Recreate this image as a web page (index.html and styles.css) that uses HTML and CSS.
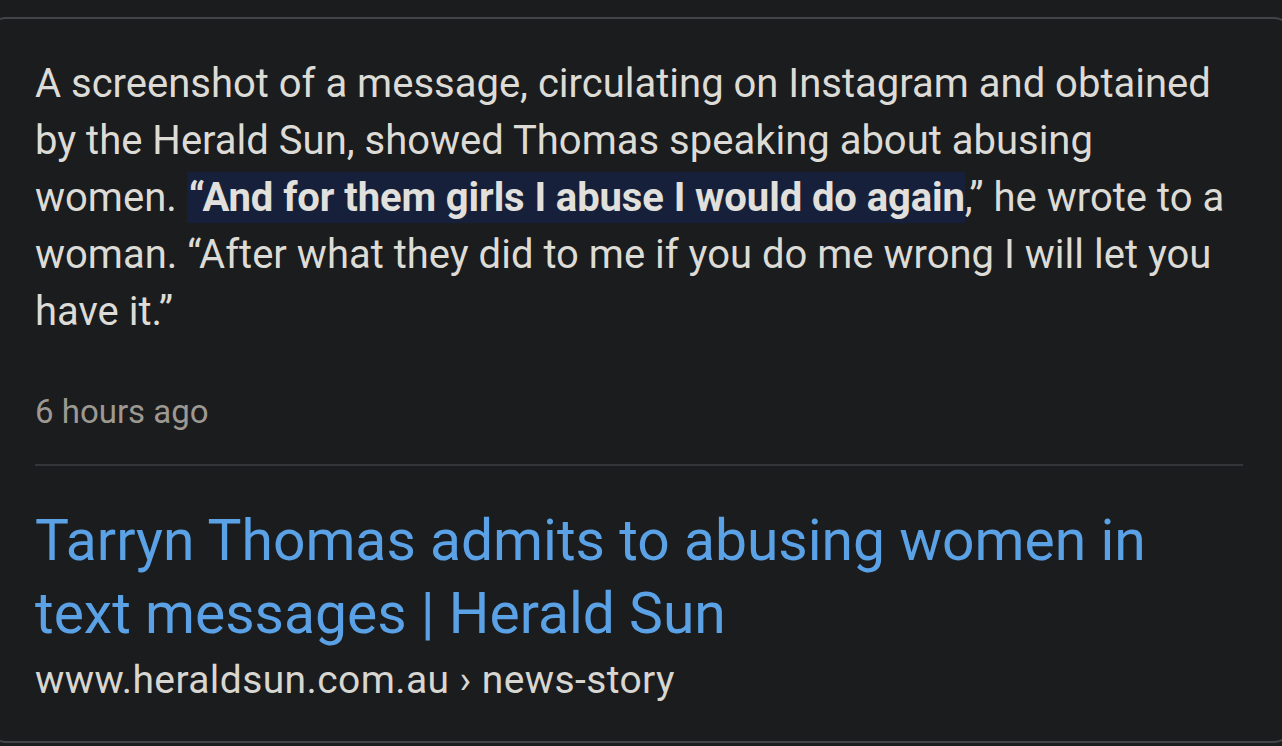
FILE: index.html
```html
<!DOCTYPE html>
<html lang="en">
<head>
<meta charset="utf-8">
<title>Herald Sun result</title>
<link rel="stylesheet" href="styles.css">
</head>
<body>
  <div class="card">
    <p class="snippet">A screenshot of a message, circulating on Instagram and obtained<br>by the Herald Sun, showed Thomas speaking about abusing<br>women. <span class="hl">“And for them girls I abuse I would do again</span>,” he wrote to a<br>woman. “After what they did to me if you do me wrong I will let you<br>have it.”</p>
    <div class="time">6 hours ago</div>
    <div class="divider"></div>
    <a class="title" href="#">Tarryn Thomas admits to abusing women in text messages | Herald Sun</a>
    <div class="url">www.heraldsun.com.au › news-story</div>
  </div>
</body>
</html>
```

FILE: styles.css
```css
html, body {
  margin: 0;
  padding: 0;
  background: #1b1c1e;
  overflow: hidden;
}
body {
  width: 1282px;
  height: 746px;
  font-family: Roboto, "Noto Sans", sans-serif;
}
.card {
  margin: 17px -10px 0 -12px;
  height: 726px;
  box-sizing: border-box;
  border: 2px solid #434447;
  border-radius: 18px;
  background: #1b1c1e;
  padding: 36px 48px 0 45px;
  display: flex;
  flex-direction: column;
}
.snippet {
  margin: 0;
  font-size: 40px;
  line-height: 57px;
  color: #dddbd6;
  width: 1240px;
  white-space: nowrap;
}
.hl {
  font-weight: 700;
  background: #16203a;
  color: #e2e0dc;
  padding-left: 2px;
  padding-top: 2px;
  padding-bottom: 2px;
  letter-spacing: -0.1px;
}
.time {
  margin-top: 52px;
  font-size: 33px;
  line-height: 40px;
  color: #9d9992;
}
.divider {
  margin-top: 32px;
  height: 2px;
  width: 1208px;
  background: #333538;
}
.title {
  margin-top: 38px;
  font-size: 57px;
  line-height: 73px;
  color: #5ba1e5;
  text-decoration: none;
  width: 1170px;
}
.url {
  margin-top: 8px;
  font-size: 39px;
  letter-spacing: 0.4px;
  line-height: 44px;
  color: #d8d6d1;
}
```
